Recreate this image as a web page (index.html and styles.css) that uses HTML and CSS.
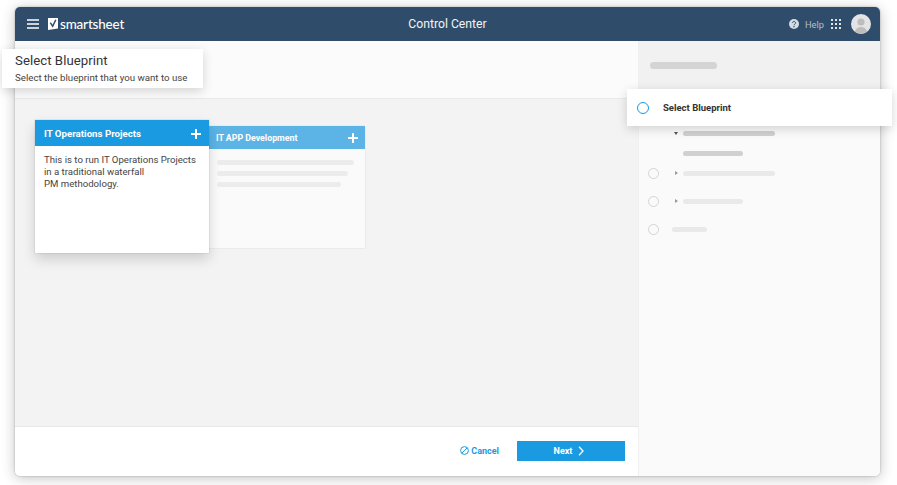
FILE: index.html
```html
<!DOCTYPE html>
<html lang="en">
<head>
<meta charset="utf-8">
<title>Control Center</title>
<link rel="stylesheet" href="styles.css">
</head>
<body>
<div class="window">
  <header class="topbar">
    <div class="brand">
      <svg class="menu" width="12" height="10" viewBox="0 0 12 10"><path d="M0 1h12M0 5h12M0 9h12" stroke="#fff" stroke-width="1.5"/></svg>
      <svg class="logo" width="10" height="12" viewBox="0 0 10 12"><path d="M0 0h10v10.500L0 12z" fill="#fff"/><path d="M2.300 4.600l2.400 3.700L7.800 1.800" fill="none" stroke="#2f4d6b" stroke-width="1.500"/></svg>
      <span class="wordmark">smartsheet</span>
    </div>
    <div class="title">Control Center</div>
    <div class="tools">
      <svg width="10" height="10" viewBox="0 0 10 10"><circle cx="5" cy="5" r="5" fill="#d5dce3"/><path d="M3.500 3.900a1.500 1.500 0 1 1 2.300 1.300c-.6.400-.8.600-.8 1.100" fill="none" stroke="#2f4d6b" stroke-width="1"/><circle cx="5" cy="7.800" r=".7" fill="#2f4d6b"/></svg>
      <span class="help">Help</span>
      <svg class="grid" width="10" height="10" viewBox="0 0 10 10" fill="#dfe4e9"><rect width="2" height="2"/><rect x="4" width="2" height="2"/><rect x="8" width="2" height="2"/><rect y="4" width="2" height="2"/><rect x="4" y="4" width="2" height="2"/><rect x="8" y="4" width="2" height="2"/><rect y="8" width="2" height="2"/><rect x="4" y="8" width="2" height="2"/><rect x="8" y="8" width="2" height="2"/></svg>
      <svg class="avatar" width="20" height="20" viewBox="0 0 20 20"><circle cx="10" cy="10" r="10" fill="#e4e4e4"/><circle cx="10" cy="8" r="3.600" fill="#bdbdbd"/><path d="M3.800 17.800c.8-3.200 3.300-4.800 6.200-4.800s5.400 1.600 6.200 4.800A10 10 0 0 1 3.800 17.800z" fill="#bdbdbd"/></svg>
    </div>
  </header>
  <div class="body">
    <main class="main">
      <div class="main-head"></div>
      <div class="cards">
        <article class="card card-active">
          <div class="card-head"><span>IT Operations Projects</span><span class="plus"></span></div>
          <p class="card-text">This is to run IT Operations Projects in a traditional waterfall<br>PM methodology.</p>
        </article>
        <article class="card card-muted">
          <div class="card-head"><span>IT APP Development</span><span class="plus"></span></div>
          <div class="card-lines">
            <i class="line line-a"></i>
            <i class="line line-b"></i>
            <i class="line line-c"></i>
          </div>
        </article>
      </div>
      <footer class="footer">
        <button class="cancel" type="button">
          <svg width="9" height="9" viewBox="0 0 9 9"><circle cx="4.500" cy="4.500" r="3.900" fill="none" stroke="#1a9ae0"/><path d="M2 7l5-5" stroke="#1a9ae0"/></svg>
          Cancel
        </button>
        <button class="next" type="button">Next
          <svg width="6" height="10" viewBox="0 0 6 10"><path d="M1 .8L5 5 1 9.200" fill="none" stroke="#fff" stroke-width="1.300"/></svg>
        </button>
      </footer>
    </main>
    <aside class="side">
      <div class="side-top"><i class="side-bar"></i></div>
      <div class="steps">
        <div class="step sub first"><i class="tri tri-down"></i><i class="pill dark w92"></i></div>
        <div class="step sub second"><i class="pill dark w60"></i></div>
        <div class="step third"><i class="dot"></i><i class="tri tri-right"></i><i class="pill w92"></i></div>
        <div class="step"><i class="dot"></i><i class="tri tri-right"></i><i class="pill w60"></i></div>
        <div class="step"><i class="dot"></i><i class="pill w34 short"></i></div>
      </div>
    </aside>
  </div>
</div>
<section class="callout callout-title">
  <h1>Select Blueprint</h1>
  <p>Select the blueprint that you want to use</p>
</section>
<section class="callout callout-step">
  <i class="ring"></i><span>Select Blueprint</span>
</section>
</body>
</html>
```

FILE: styles.css
```css
* { box-sizing: border-box; }
html, body { height: 100%; }
body {
  margin: 0;
  position: relative;
  width: 897px;
  height: 485px;
  overflow: hidden;
  background: #fff;
  font-family: Roboto, "Liberation Sans", sans-serif;
  padding: 7px 17px 9px 15px;
}
.window {
  height: 469px;
  border-radius: 5px;
  overflow: hidden;
  display: flex;
  flex-direction: column;
  background: #fff;
  box-shadow: 0 0 2px rgba(0,0,0,.3), 0 2px 14px rgba(0,0,0,.24);
}
.topbar {
  flex: 0 0 34px;
  background: #2f4d6b;
  display: grid;
  grid-template-columns: 1fr auto 1fr;
  align-items: center;
  padding: 0 9px 0 12px;
  color: #fff;
}
.brand { display: flex; align-items: center; }
.menu { margin-right: 9px; }
.logo { margin-right: 2px; }
.wordmark { font: 500 13.4px/16px Lato, sans-serif; letter-spacing: -.15px; }
.title { font-size: 12.2px; color: #f2f4f6; margin-right: 3px; }
.tools { display: flex; align-items: center; justify-content: flex-end; }
.help { font-size: 9.300px; color: #b2bfcc; margin: 0 7px 0 6px; }
.grid { margin-right: 10px; }
.body { flex: 1; display: flex; min-height: 0; }
.main { width: 623px; display: flex; flex-direction: column; }
.main-head { flex: 0 0 58px; background: #fbfbfb; border-bottom: 1px solid #e9e9e9; }
.cards {
  flex: 1;
  background: #f3f3f3;
  display: flex;
  align-items: flex-start;
  padding: 21px 0 0 20px;
}
.card { display: flex; flex-direction: column; }
.card-head { display: flex; align-items: center; justify-content: space-between; color: #fff; font-weight: 700; }
.plus { position: relative; width: 10px; height: 10px; flex: none; }
.plus::before, .plus::after { content: ""; position: absolute; background: #fff; }
.plus::before { left: 4px; top: 0; width: 2px; height: 10px; }
.plus::after { left: 0; top: 4px; width: 10px; height: 2px; }
.card-active {
  width: 174px;
  height: 133px;
  background: #fff;
  position: relative;
  z-index: 1;
  box-shadow: 0 0 1px rgba(0,0,0,.3), 0 6px 12px rgba(0,0,0,.16);
}
.card-active .card-head {
  height: 26px;
  background: #1a9ae0;
  font-size: 9.7px;
  padding: 1px 8px 0 9px;
}
.card-text {
  margin: 0;
  padding: 8px 9px;
  font-size: 9.6px;
  line-height: 12px;
  color: #444;
}
.card-muted {
  width: 156px;
  height: 122px;
  margin-top: 6px;
  background: #fafafa;
  box-shadow: 0 0 1px rgba(0,0,0,.2);
}
.card-muted .card-head {
  height: 23px;
  background: #5cb4e6;
  font-size: 8.8px;
  padding: 0 7px 0 7px;
}
.card-lines { display: flex; flex-direction: column; gap: 6px; padding: 11px 8px; }
.line { display: block; height: 5px; border-radius: 3px; background: #ececec; }
.line-a { width: 137px; }
.line-b { width: 131px; }
.line-c { width: 124px; }
.footer {
  flex: 0 0 50px;
  background: #fff;
  border-top: 1px solid #e8e8e8;
  display: flex;
  align-items: center;
  justify-content: flex-end;
  padding: 0 13px 2px 0;
}
button { font-family: inherit; border: 0; padding: 0; font-weight: 700; font-size: 9px; }
.cancel { background: none; color: #1a9ae0; display: flex; align-items: center; gap: 2px; margin-right: 18px; }
.next {
  width: 108px;
  height: 20px;
  background: #1a9ae0;
  color: #fff;
  display: flex;
  align-items: center;
  justify-content: center;
  gap: 6px;
  padding-right: 4px;
}
.side { flex: 1; background: #fafafa; border-left: 1px solid #f0f0f0; display: flex; flex-direction: column; }
.side-top { flex: 0 0 48px; background: #f1f1f1; padding: 21px 0 0 11px; }
.side-bar { display: block; width: 67px; height: 7px; border-radius: 4px; background: #d4d4d4; }
.steps { display: flex; flex-direction: column; padding: 0 0 0 9px; }
.step { display: flex; align-items: center; height: 28px; }
.step.sub { padding-left: 26px; height: 20px; }
.step.first { margin-top: 34px; height: 20px; }
.step.second { padding-left: 35px; height: 20px; }
.step.third { margin-top: -4px; }
.dot { width: 11px; height: 11px; border-radius: 50%; border: 1px solid #d4d4d4; flex: none; margin-right: 13px; }
.tri { width: 0; height: 0; flex: none; margin-right: 5px; }
.tri-down { border: 2.500px solid transparent; border-top: 3px solid #555; border-bottom: 0; margin-right: 5px; }
.tri-right { border: 2.500px solid transparent; border-left: 3px solid #999; border-right: 0; margin-left: 3px; margin-right: 5px; }
.pill { display: block; height: 5px; border-radius: 3px; background: #e9e9e9; }
.pill.dark { background: #d0d0d0; }
.w92 { width: 92px; }
.w60 { width: 60px; }
.w34 { width: 35px; }
.callout { position: absolute; background: #fff; box-shadow: 0 3px 10px rgba(0,0,0,.16); }
.callout-title { left: 2px; top: 49px; width: 201px; height: 39px; padding: 3px 0 0 13px; }
.callout-title h1 { margin: 0; font-size: 13.2px; line-height: 17px; font-weight: 400; color: #333; letter-spacing: .05px; }
.callout-title p { margin: 3px 0 0; font-size: 9.7px; line-height: 12px; color: #444; }
.callout-step {
  left: 627px;
  top: 89px;
  width: 265px;
  height: 37px;
  display: flex;
  align-items: center;
  padding-left: 10px;
  font-size: 9.5px;
  font-weight: 700;
  color: #333;
}
.ring { width: 12px; height: 12px; border-radius: 50%; border: 1.500px solid #1a9ae0; margin-right: 14px; flex: none; }
```
